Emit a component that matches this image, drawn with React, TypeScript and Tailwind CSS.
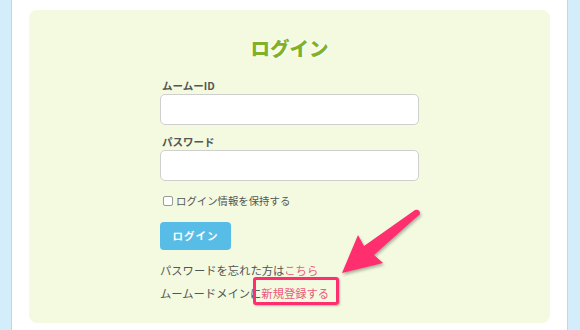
export default function App() {
  const font = { fontFamily: '"Noto Sans CJK JP", "Noto Sans", sans-serif' }
  return (
    <div className="relative flex w-[580px] h-[330px] overflow-hidden bg-white" style={font}>
      <div className="w-[12px] shrink-0 bg-[#d3eefa] border-r border-[#b9dcec]" />

      <div className="flex-1 px-[17px] pt-[10px]">
        <div className="h-[313px] rounded-[8px] bg-[#f3fadf] pt-[24px]">
          <h1 className="h-[28px] text-center text-[19.5px] font-black leading-[28px] text-[#7fb226] [text-shadow:0_0_2px_#fff,0_0_2px_#fff,0_0_3px_#fff,0_0_3px_#fff]">
            ログイン
          </h1>

          <div className="mx-auto w-[259px] text-[#555]">
            <label className="mt-[16px] block pl-[2px] text-[10.5px] font-bold leading-[16px]">ムームーID</label>
            <input className="block h-[31px] w-full rounded-[5px] border border-[#cfcfcf] bg-white" />

            <label className="mt-[9px] block pl-[2px] text-[10.5px] font-bold leading-[16px]">パスワード</label>
            <input type="password" className="block h-[31px] w-full rounded-[5px] border border-[#cfcfcf] bg-white" />

            <div className="mt-[12px] flex items-center gap-[3px] pl-[3px] text-[10.4px] leading-[16px]">
              <input type="checkbox" className="h-[10px] w-[10px] appearance-none rounded-[2px] border border-[#999] bg-white" />
              <span>ログイン情報を保持する</span>
            </div>

            <button className="mt-[13px] h-[28px] w-[71px] rounded-[4px] bg-[#58bde6] text-[10.5px] font-bold tracking-[1px] text-white">
              ログイン
            </button>

            <p className="mt-[8.5px] text-[11.3px] leading-[23px]">
              パスワードを忘れた方は<span className="text-[#ea5a7c]">こちら</span>
            </p>
            <p className="text-[11.3px] leading-[23px]">
              ムームードメインに<span className="text-[#ea5a7c]">新規登録する</span>
            </p>
          </div>
        </div>
      </div>

      <div className="w-[13px] shrink-0 bg-[#d3eefa] border-l border-[#b9dcec]" />

      {/* annotation: highlight box + arrow */}
      <div className="absolute left-[253px] top-[277px] h-[28px] w-[86px] rounded-[3px] border-[3px] border-[#ff2e6e] shadow-[1px_1px_2px_rgba(0,0,0,0.25)]" />
      <svg className="absolute left-0 top-0" width="580" height="330" style={{ filter: "drop-shadow(1px 2px 1.5px rgba(0,0,0,0.3))" }}>
        <path
          d="M342 273 L358 235 L364 246 L415 210 Q420 209 420 214 L374 255 L383 263 Z"
          fill="#ff2e6e"
          strokeLinejoin="round"
        />
      </svg>
    </div>
  )
}
